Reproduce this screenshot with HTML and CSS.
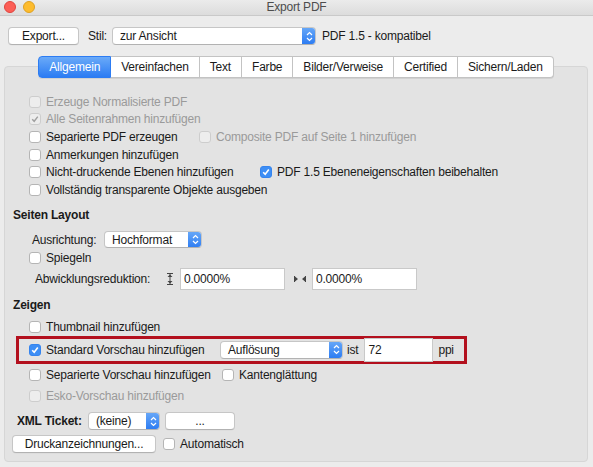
FILE: index.html
```html
<!DOCTYPE html>
<html lang="de">
  <head>
    <meta charset="UTF-8" />
    <title>Export PDF</title>
    <link rel="stylesheet" href="styles.css">
  </head>
  <body>
    <div class="titlebar">
      <span class="light red"></span>
      <span class="light yellow"></span>
      <div class="title">Export PDF</div>
    </div>

    <div class="toolbar">
      <button class="btn export-btn">Export...</button>
      <span class="lbl stil-lbl">Stil:</span>
      <div class="select stil-select">
        <span>zur Ansicht</span>
        <span class="stepper"><svg width="7" height="11" viewBox="0 0 7 11"><path d="M1 4 L3.5 1.5 L6 4 M1 7 L3.5 9.5 L6 7" fill="none" stroke="#fff" stroke-width="1.2"/></svg></span>
      </div>
      <span class="lbl compat">PDF 1.5 - kompatibel</span>
    </div>

    <div class="panel">
      <div class="tabs">
        <span class="tab active">Allgemein</span>
        <span class="tab">Vereinfachen</span>
        <span class="tab">Text</span>
        <span class="tab">Farbe</span>
        <span class="tab">Bilder/Verweise</span>
        <span class="tab">Certified</span>
        <span class="tab">Sichern/Laden</span>
      </div>

      <div class="group general">
        <label class="row dim"><span class="cb"></span>Erzeuge Normalisierte PDF</label>
        <label class="row dim"><span class="cb checked"></span>Alle Seitenrahmen hinzufügen</label>
        <div class="row">
          <label class="opt col1"><span class="cb"></span>Separierte PDF erzeugen</label>
          <label class="opt dim"><span class="cb"></span>Composite PDF auf Seite 1 hinzufügen</label>
        </div>
        <label class="row"><span class="cb"></span>Anmerkungen hinzufügen</label>
        <div class="row">
          <label class="opt col2"><span class="cb"></span>Nicht-druckende Ebenen hinzufügen</label>
          <label class="opt"><span class="cb checked"></span>PDF 1.5 Ebeneneigenschaften beibehalten</label>
        </div>
        <label class="row"><span class="cb"></span>Vollständig transparente Objekte ausgeben</label>
      </div>

      <h3 class="section layout-head">Seiten Layout</h3>
      <div class="row orient-row">
        <span class="lbl orient-lbl">Ausrichtung:</span>
        <div class="select orient-select">
          <span>Hochformat</span>
          <span class="stepper"><svg width="7" height="11" viewBox="0 0 7 11"><path d="M1 4 L3.5 1.5 L6 4 M1 7 L3.5 9.5 L6 7" fill="none" stroke="#fff" stroke-width="1.2"/></svg></span>
        </div>
      </div>
      <label class="row mirror-row"><span class="cb"></span>Spiegeln</label>
      <div class="row reduce-row">
        <span class="lbl reduce-lbl">Abwicklungsreduktion:</span>
        <svg class="dim-icon" width="8" height="12" viewBox="0 0 8 12">
          <path d="M1 0.5 H7 M1 11.5 H7 M4 1 V11" stroke="#444" stroke-width="1"/>
          <path d="M1.5 4 L4 1.5 L6.5 4 Z M1.5 8 L4 10.5 L6.5 8 Z" fill="#444"/>
        </svg>
        <input class="field reduce-field" type="text" value="0.0000%" readonly>
        <svg class="dim-icon h-icon" width="12" height="8" viewBox="0 0 12 8">
          <path d="M0.5 1 V7 M11.5 1 V7" stroke="#444" stroke-width="1"/>
          <path d="M1 1.5 L4 4 L1 6.5 Z M11 1.5 L8 4 L11 6.5 Z" fill="#444"/>
        </svg>
        <input class="field reduce-field" type="text" value="0.0000%" readonly>
      </div>

      <h3 class="section show-head">Zeigen</h3>
      <label class="row thumb-row"><span class="cb"></span>Thumbnail hinzufügen</label>
      <div class="preview-box">
        <label class="opt preview-opt"><span class="cb checked"></span>Standard Vorschau hinzufügen</label>
        <div class="select res-select">
          <span>Auflösung</span>
          <span class="stepper"><svg width="7" height="11" viewBox="0 0 7 11"><path d="M1 4 L3.5 1.5 L6 4 M1 7 L3.5 9.5 L6 7" fill="none" stroke="#fff" stroke-width="1.2"/></svg></span>
        </div>
        <span class="lbl ist">ist</span>
        <input class="field ppi-field" type="text" value="72" readonly>
        <span class="lbl">ppi</span>
      </div>
      <div class="row sep-row">
        <label class="opt col3"><span class="cb"></span>Separierte Vorschau hinzufügen</label>
        <label class="opt"><span class="cb"></span>Kantenglättung</label>
      </div>
      <label class="row dim esko-row"><span class="cb"></span>Esko-Vorschau hinzufügen</label>

      <div class="row xml-row">
        <span class="lbl bold">XML Ticket:</span>
        <div class="select xml-select">
          <span>(keine)</span>
          <span class="stepper"><svg width="7" height="11" viewBox="0 0 7 11"><path d="M1 4 L3.5 1.5 L6 4 M1 7 L3.5 9.5 L6 7" fill="none" stroke="#fff" stroke-width="1.2"/></svg></span>
        </div>
        <button class="btn dots-btn">...</button>
      </div>
      <div class="row marks-row">
        <button class="btn marks-btn">Druckanzeichnungen...</button>
        <label class="opt"><span class="cb"></span>Automatisch</label>
      </div>
    </div>
  </body>
</html>
```

FILE: styles.css
```css
* {
  margin: 0;
  padding: 0;
  box-sizing: border-box;
}

body {
  font-family: "Liberation Sans", Arial, sans-serif;
  font-size: 12px;
  letter-spacing: -0.2px;
  color: #1a1a1a;
  background-color: #ececec;
  width: 593px;
  height: 467px;
  overflow: hidden;
  white-space: nowrap;
}

/* window title bar */
.titlebar {
  position: relative;
  height: 16px;
  background: linear-gradient(#ebebeb, #dcdcdc);
  border-bottom: 1px solid #c9c9c9;
  display: flex;
  align-items: center;
  padding-left: 4px;
  gap: 7px;
}

.light {
  width: 12px;
  height: 12px;
  border-radius: 50%;
  margin-top: -2px;
}

.light.red {
  background: #fc5f57;
  border: 1px solid #e0443e;
}

.light.yellow {
  background: #fdbc2e;
  border: 1px solid #dea123;
}

.title {
  position: absolute;
  left: 0;
  right: 0;
  top: 0;
  text-align: center;
  color: #4d4d4d;
  line-height: 14px;
}

/* top toolbar */
.toolbar {
  display: flex;
  align-items: center;
  height: 18px;
  margin-top: 11px;
  padding-left: 8px;
}

.btn {
  font: inherit;
  letter-spacing: inherit;
  color: #1a1a1a;
  background: #fff;
  border: 1px solid #c6c6c6;
  border-bottom-color: #b2b2b2;
  border-radius: 4px;
  height: 18px;
  line-height: 16px;
  text-align: center;
  box-shadow: 0 0.5px 0 rgba(0, 0, 0, 0.05);
}

.export-btn {
  width: 71px;
}

.stil-lbl {
  margin-left: 9px;
  margin-right: 5px;
}

.select {
  display: flex;
  align-items: center;
  justify-content: space-between;
  height: 18px;
  background: #fff;
  border: 1px solid #c6c6c6;
  border-bottom-color: #b2b2b2;
  border-radius: 4px;
  padding-left: 7px;
  overflow: hidden;
}

.stepper {
  display: flex;
  align-items: center;
  justify-content: center;
  width: 14px;
  height: 18px;
  margin-right: -1px;
  background: linear-gradient(#69a9f8, #2a7af2);
  border-radius: 0 4px 4px 0;
}

.stil-select {
  width: 204px;
}

.compat {
  margin-left: 6px;
}

/* tab view */
.panel {
  margin: 21px 5px 0 4px;
  height: 396px;
  background: #e3e3e3;
  border: 1px solid #d6d6d6;
  border-radius: 4px;
  padding-left: 7px;
}

.tabs {
  display: flex;
  justify-content: center;
  margin-top: -11px;
  margin-left: -7px;
}

.tab {
  height: 22px;
  line-height: 20px;
  padding: 0 10px;
  background: #fff;
  border: 1px solid #c3c3c3;
  border-left: none;
  box-shadow: 0 1px 0 rgba(0, 0, 0, 0.08);
}

.tab:first-child {
  border-left: 1px solid #c3c3c3;
  border-radius: 4px 0 0 4px;
}

.tab:last-child {
  border-radius: 0 4px 4px 0;
}

.tab.active {
  color: #fff;
  background: linear-gradient(#6aaaf8, #2c7cf3);
  border-color: #2c7cf3;
}

/* option rows */
.row {
  display: flex;
  align-items: center;
  height: 17.6px;
}

.opt {
  display: flex;
  align-items: center;
}

.general {
  margin-top: 15px;
  padding-left: 17px;
}

.cb {
  flex: none;
  width: 12px;
  height: 12px;
  margin-right: 5px;
  background: #fff;
  border: 1px solid #b5b5b5;
  border-radius: 3px;
}

.cb.checked {
  background: #3d8ef5 url("data:image/svg+xml,%3Csvg xmlns='http://www.w3.org/2000/svg' width='10' height='10'%3E%3Cpath d='M2.2 5.2 L4.2 7.3 L7.8 2.6' fill='none' stroke='%23fff' stroke-width='1.6'/%3E%3C/svg%3E") center / 10px no-repeat;
  border-color: #3584ee;
}

.dim {
  color: #9a9a9a;
}

.dim .cb {
  background-color: #ededed;
  border-color: #cdcdcd;
}

.dim .cb.checked {
  background: #ededed url("data:image/svg+xml,%3Csvg xmlns='http://www.w3.org/2000/svg' width='10' height='10'%3E%3Cpath d='M2.2 5.2 L4.2 7.3 L7.8 2.6' fill='none' stroke='%23a0a0a0' stroke-width='1.4'/%3E%3C/svg%3E") center / 10px no-repeat;
}

.col1 {
  width: 170px;
}

.col2 {
  width: 231px;
}

.section {
  font-size: 12px;
  font-weight: bold;
  height: 18px;
  line-height: 18px;
  padding-left: 1px;
}

.layout-head {
  margin-top: 7px;
}

.orient-row {
  height: 18px;
  margin-top: 7px;
  padding-left: 20px;
}

.orient-lbl {
  width: 72px;
}

.orient-select {
  width: 98px;
  height: 17px;
}

.mirror-row {
  height: 18px;
  padding-left: 17px;
}

.reduce-row {
  height: 22px;
  margin-top: 1px;
  padding-left: 23px;
}

.reduce-lbl {
  width: 131px;
}

.field {
  font: inherit;
  letter-spacing: inherit;
  color: #1a1a1a;
  height: 22px;
  background: #fff;
  border: 1px solid #c9c9c9;
  padding-left: 3px;
  outline: none;
}

.reduce-field {
  width: 105px;
  margin-left: 6px;
}

.h-icon {
  margin-left: 9px;
}

.show-head {
  margin-top: 6px;
}

.thumb-row {
  height: 17px;
  margin-top: 5px;
  padding-left: 17px;
}

.preview-box {
  display: flex;
  align-items: center;
  width: 451px;
  height: 28px;
  margin-left: 4px;
  border: 3px solid #b3101e;
  padding-left: 10px;
}

.preview-opt {
  width: 191px;
}

.res-select {
  width: 123px;
}

.ist {
  margin-left: 4px;
}

.ppi-field {
  width: 69px;
  height: 24px;
  margin: 0 5px 0 6px;
}

.sep-row {
  height: 18px;
  margin-top: 2px;
  padding-left: 17px;
}

.col3 {
  width: 193px;
}

.esko-row {
  height: 18px;
  margin-top: 3px;
  padding-left: 17px;
}

.xml-row {
  height: 19px;
  margin-top: 7px;
  padding-left: 5px;
}

.bold {
  font-weight: bold;
  width: 71px;
}

.xml-select {
  width: 72px;
}

.dots-btn {
  width: 70px;
  margin-left: 5px;
}

.marks-row {
  height: 19px;
  margin-top: 4px;
}

.marks-btn {
  width: 144px;
  margin-right: 7px;
}
```
